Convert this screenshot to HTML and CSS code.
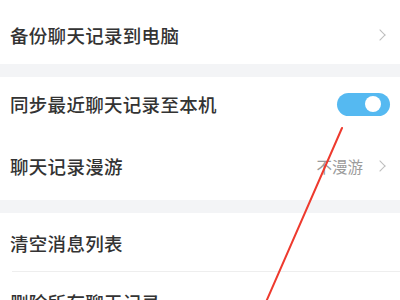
FILE: index.html
```html
<!DOCTYPE html>
<html lang="zh-CN">
<head>
<meta charset="utf-8">
<link rel="stylesheet" href="styles.css">
</head>
<body>
<div class="page">
  <div class="section first">
    <div class="row r1">
      <span class="label">备份聊天记录到电脑</span>
      <span class="chev"></span>
    </div>
  </div>
  <div class="section">
    <div class="row r2">
      <span class="label">同步最近聊天记录至本机</span>
      <span class="toggle"><span class="knob"></span></span>
    </div>
    <div class="row r3">
      <span class="label">聊天记录漫游</span>
      <span class="right"><span class="value">不漫游</span><span class="chev"></span></span>
    </div>
  </div>
  <div class="section last">
    <div class="row r4 sep">
      <span class="label">清空消息列表</span>
    </div>
    <div class="row r5">
      <span class="label">删除所有聊天记录</span>
    </div>
  </div>
  <svg class="mark" width="400" height="300" viewBox="0 0 400 300">
    <line x1="342" y1="128" x2="266" y2="302" stroke="#ee3a2e" stroke-width="2" stroke-linecap="round"/>
  </svg>
</div>
</body>
</html>
```
FILE: styles.css
```css
html, body {
  margin: 0;
  padding: 0;
  width: 400px;
  height: 300px;
  overflow: hidden;
  background: #f3f4f6;
}
.page {
  position: relative;
  width: 400px;
  height: 300px;
  overflow: hidden;
  font-family: "Noto Sans CJK SC", "Noto Sans", sans-serif;
  display: flex;
  flex-direction: column;
  gap: 13px;
}
.section {
  background: #ffffff;
  display: flex;
  flex-direction: column;
  flex-shrink: 0;
}
.section.last {
  flex: 1;
  flex-shrink: 1;
  min-height: 0;
}
.row {
  display: flex;
  align-items: center;
  justify-content: space-between;
  padding: 0 12px 0 10px;
  position: relative;
  flex-shrink: 0;
}
.label {
  font-size: 18.5px;
  color: #333333;
  font-weight: 500;
  letter-spacing: 0.3px;
  white-space: nowrap;
}
.r1 { height: 58px; padding-top: 6px; }
.r2 { height: 54px; }
.r3 { height: 69px; }
.r4 { height: 59px; }
.r5 {
  height: 28px;
  align-items: flex-start;
  padding-top: 17px;
  box-sizing: border-box;
  overflow: hidden;
}
.sep::after {
  content: "";
  position: absolute;
  left: 12px;
  right: 0;
  bottom: 0;
  height: 1px;
  background: #eeeeee;
}
.chev {
  width: 7px;
  height: 7px;
  border-right: 1.6px solid #bdbdbd;
  border-top: 1.6px solid #bdbdbd;
  transform: rotate(45deg);
  margin-right: 4px;
}
.right {
  display: flex;
  align-items: center;
  gap: 13px;
}
.value {
  font-size: 15.5px;
  color: #9b9b9b;
}
.toggle {
  width: 53px;
  height: 23px;
  border-radius: 12px;
  background: #55b9f1;
  display: flex;
  align-items: center;
  justify-content: flex-end;
  padding-right: 9px;
  box-sizing: border-box;
  margin-right: -2px;
}
.knob {
  width: 16px;
  height: 16px;
  border-radius: 50%;
  background: #ffffff;
}
.mark {
  position: absolute;
  left: 0;
  top: 0;
}
```
